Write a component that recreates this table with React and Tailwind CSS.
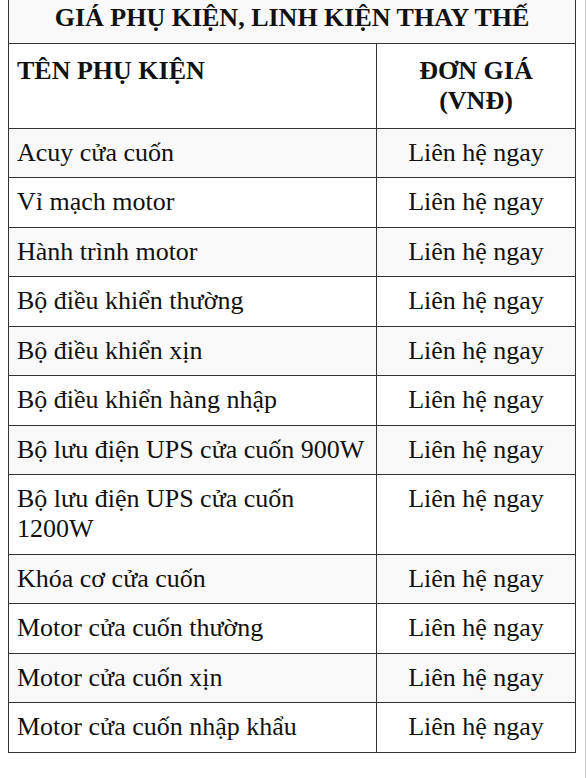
const rows = [
  'Acuy cửa cuốn',
  'Vỉ mạch motor',
  'Hành trình motor',
  'Bộ điều khiển thường',
  'Bộ điều khiển xịn',
  'Bộ điều khiển hàng nhập',
  'Bộ lưu điện UPS cửa cuốn 900W',
  'Bộ lưu điện UPS cửa cuốn 1200W',
  'Khóa cơ cửa cuốn',
  'Motor cửa cuốn thường',
  'Motor cửa cuốn xịn',
  'Motor cửa cuốn nhập khẩu',
];

const cell = 'border border-[#333] px-2 py-[9.25px] align-top';

export default function App() {
  return (
    <div className="min-h-[778px] w-[586px] overflow-hidden bg-white border-r border-[#ccc] text-[#111] font-['Liberation_Serif']">
      <table className="ml-2 mt-[-7px] w-[568px] border-collapse text-[26px] leading-[30px] font-['Liberation_Serif']">
        <thead>
          <tr className="bg-[#f9f9f9]">
            <th colSpan={2} className={`${cell} text-center font-bold`}>
              GIÁ PHỤ KIỆN, LINH KIỆN THAY THẾ
            </th>
          </tr>
          <tr className="bg-white">
            <th className="border border-[#333] px-2 py-3 w-[368px] text-left align-top font-bold">
              TÊN PHỤ KIỆN
            </th>
            <th className="border border-[#333] px-2 py-3 text-center align-top font-bold">
              ĐƠN GIÁ
              <br />
              (VNĐ)
            </th>
          </tr>
        </thead>
        <tbody>
          {rows.map((name, i) => (
            <tr key={name} className={i % 2 === 0 ? 'bg-[#f9f9f9]' : 'bg-white'}>
              <td className={cell}>{name}</td>
              <td className={`${cell} text-center`}>Liên hệ ngay</td>
            </tr>
          ))}
        </tbody>
      </table>
    </div>
  );
}
